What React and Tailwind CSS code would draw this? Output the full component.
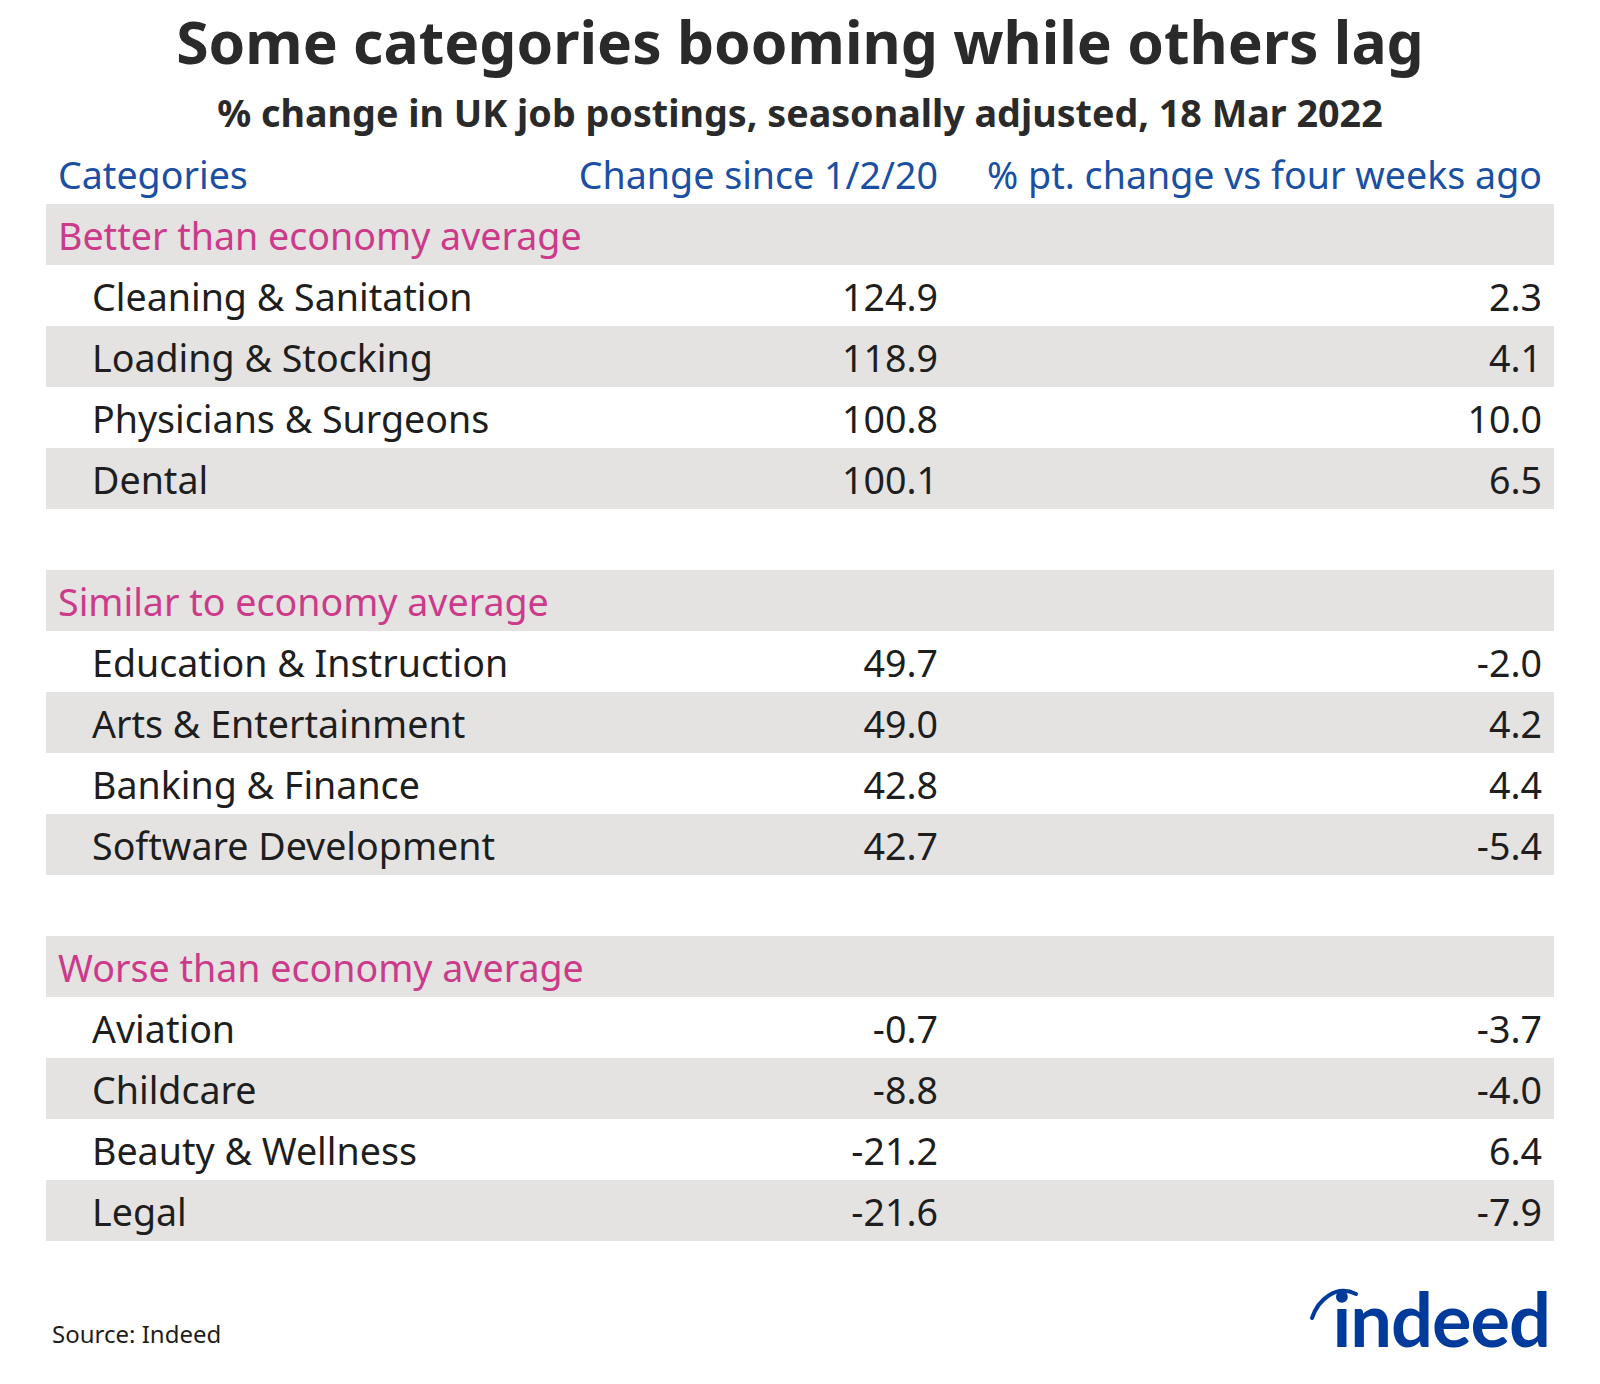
import React from "react";

const SECTIONS = [
  {
    label: "Better than economy average",
    rows: [
      ["Cleaning & Sanitation", "124.9", "2.3"],
      ["Loading & Stocking", "118.9", "4.1"],
      ["Physicians & Surgeons", "100.8", "10.0"],
      ["Dental", "100.1", "6.5"],
    ],
  },
  {
    label: "Similar to economy average",
    rows: [
      ["Education & Instruction", "49.7", "-2.0"],
      ["Arts & Entertainment", "49.0", "4.2"],
      ["Banking & Finance", "42.8", "4.4"],
      ["Software Development", "42.7", "-5.4"],
    ],
  },
  {
    label: "Worse than economy average",
    rows: [
      ["Aviation", "-0.7", "-3.7"],
      ["Childcare", "-8.8", "-4.0"],
      ["Beauty & Wellness", "-21.2", "6.4"],
      ["Legal", "-21.6", "-7.9"],
    ],
  },
];

function IndeedLogo() {
  return (
    <div className="relative h-[84px] w-[250px] mb-[18px]">
      <svg className="absolute left-0 top-0" width="70" height="50" viewBox="0 0 70 50">
        <path d="M12 36 C 18 18, 36 2, 56 12" fill="none" stroke="#003a9b" strokeWidth="4" strokeLinecap="round" />
      </svg>
      <span className="absolute right-0 top-0 text-[74px] font-bold leading-none tracking-[-1px] text-[#003a9b] [font-family:Lato,'Noto_Sans',sans-serif]">
        indeed
      </span>
    </div>
  );
}

export default function App() {
  return (
    <div className="w-[1600px] h-[1384px] bg-white flex flex-col text-[#1e1e1e] [font-family:'Noto_Sans',sans-serif]">
      <div className="h-[86px] flex items-center justify-center pb-[4px]">
        <h1 className="text-[58.8px] font-bold text-[#2a2a2a] leading-none">Some categories booming while others lag</h1>
      </div>
      <div className="h-[57px] flex items-center justify-center pb-[3px]">
        <h2 className="text-[37.7px] font-bold text-[#2a2a2a] leading-none">
          % change in UK job postings, seasonally adjusted, 18 Mar 2022
        </h2>
      </div>

      <div className="mx-[46px] flex flex-col text-[37.6px]">
        <div className="h-[61px] flex items-center pt-[3px] text-[#1a4fa3]">
          <div className="w-[500px] pl-[12px]">Categories</div>
          <div className="w-[392px] text-right">Change since 1/2/20</div>
          <div className="flex-1 text-right pr-[12px]">% pt. change vs four weeks ago</div>
        </div>

        {SECTIONS.map((section, si) => (
          <div key={section.label} className="flex flex-col">
            {si > 0 && <div className="h-[61px]" />}
            <div className="h-[61px] flex items-center pt-[3px] bg-[#e4e3e2] pl-[12px] text-[#cc3a8a]">{section.label}</div>
            {section.rows.map((row, i) => (
              <div
                key={row[0]}
                className={`h-[61px] flex items-center pt-[3px] ${i % 2 === 1 ? "bg-[#e4e3e2]" : "bg-white"}`}
              >
                <div className="w-[700px] pl-[46px]">{row[0]}</div>
                <div className="w-[192px] text-right">{row[1]}</div>
                <div className="flex-1 text-right pr-[12px]">{row[2]}</div>
              </div>
            ))}
          </div>
        ))}
      </div>

      <div className="flex-1 flex items-end justify-between pl-[52px] pr-[50px]">
        <div className="text-[24px] text-[#1e1e1e] mb-[32px]">Source: Indeed</div>
        <IndeedLogo />
      </div>
    </div>
  );
}
